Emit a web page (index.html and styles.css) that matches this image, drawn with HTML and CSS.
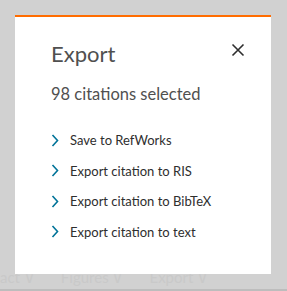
FILE: index.html
```html
<!DOCTYPE html>
<html lang="en">
<head>
    <meta charset="UTF-8">
    <meta name="viewport" content="width=device-width, initial-scale=1.0">
    <title>Export</title>
    <link rel="stylesheet" href="styles.css">
</head>
<body>
    <div class="page">
        <div class="toolbar">
            <span>act &#8744;</span>
            <span>Figures &#8744;</span>
            <span>Export &#8744;</span>
        </div>
    </div>

    <div class="overlay">
        <div class="modal">
            <div class="modal-head">
                <h2 class="modal-title">Export</h2>
                <button class="close" aria-label="Close">
                    <svg width="14" height="14" viewBox="0 0 14 14">
                        <path d="M1.5 1.5 L12.5 12.5 M12.5 1.5 L1.5 12.5" stroke="#2e2e2e" stroke-width="1.6" fill="none"/>
                    </svg>
                </button>
            </div>
            <p class="selected">98 citations selected</p>
            <ul class="export-list">
                <li><a href="#"><svg class="chev" width="8" height="13" viewBox="0 0 8 13"><path d="M1.5 1 L6.5 6.5 L1.5 12" stroke="#007398" stroke-width="1.6" fill="none"/></svg>Save to RefWorks</a></li>
                <li><a href="#"><svg class="chev" width="8" height="13" viewBox="0 0 8 13"><path d="M1.5 1 L6.5 6.5 L1.5 12" stroke="#007398" stroke-width="1.6" fill="none"/></svg>Export citation to RIS</a></li>
                <li><a href="#"><svg class="chev" width="8" height="13" viewBox="0 0 8 13"><path d="M1.5 1 L6.5 6.5 L1.5 12" stroke="#007398" stroke-width="1.6" fill="none"/></svg>Export citation to BibTeX</a></li>
                <li><a href="#"><svg class="chev" width="8" height="13" viewBox="0 0 8 13"><path d="M1.5 1 L6.5 6.5 L1.5 12" stroke="#007398" stroke-width="1.6" fill="none"/></svg>Export citation to text</a></li>
            </ul>
        </div>
    </div>
</body>
</html>
```

FILE: styles.css
```css
html, body {
  margin: 0;
  height: 100%;
}

body {
  background: #d1d1d1;
  font-family: Lato, "Open Sans", sans-serif;
  overflow: hidden;
}

.page {
  height: 291px;
  box-sizing: border-box;
  display: flex;
  flex-direction: column;
  justify-content: flex-end;
  border-bottom: 2px solid #bdbdbd;
}

.toolbar {
  display: flex;
  gap: 26px;
  padding: 0 0 2px 0;
  font-size: 15px;
  color: #c9c9c9;
}

.overlay {
  position: absolute;
  top: 15px;
  left: 15px;
}

.modal {
  width: 256px;
  height: 259px;
  box-sizing: border-box;
  background: #fff;
  border-top: 2px solid #ff6c00;
  padding: 22px 26px 0 36px;
}

.modal-head {
  display: flex;
  justify-content: space-between;
  align-items: flex-start;
}

.modal-title {
  margin: 0;
  font-size: 22px;
  font-weight: 400;
  color: #505050;
  line-height: 30px;
}

.close {
  border: none;
  background: none;
  padding: 0;
  margin-top: 4px;
  cursor: pointer;
}

.selected {
  margin: 14px 0 0 0;
  font-size: 16.5px;
  color: #505050;
  line-height: 22px;
}

.export-list {
  list-style: none;
  margin: 20px 0 0 0;
  padding: 0;
}

.export-list li {
  height: 30.5px;
  display: flex;
  align-items: center;
}

.export-list a {
  display: flex;
  align-items: center;
  gap: 11px;
  font-size: 13px;
  color: #2e2e2e;
  text-decoration: none;
}

.chev {
  flex: none;
}
```
